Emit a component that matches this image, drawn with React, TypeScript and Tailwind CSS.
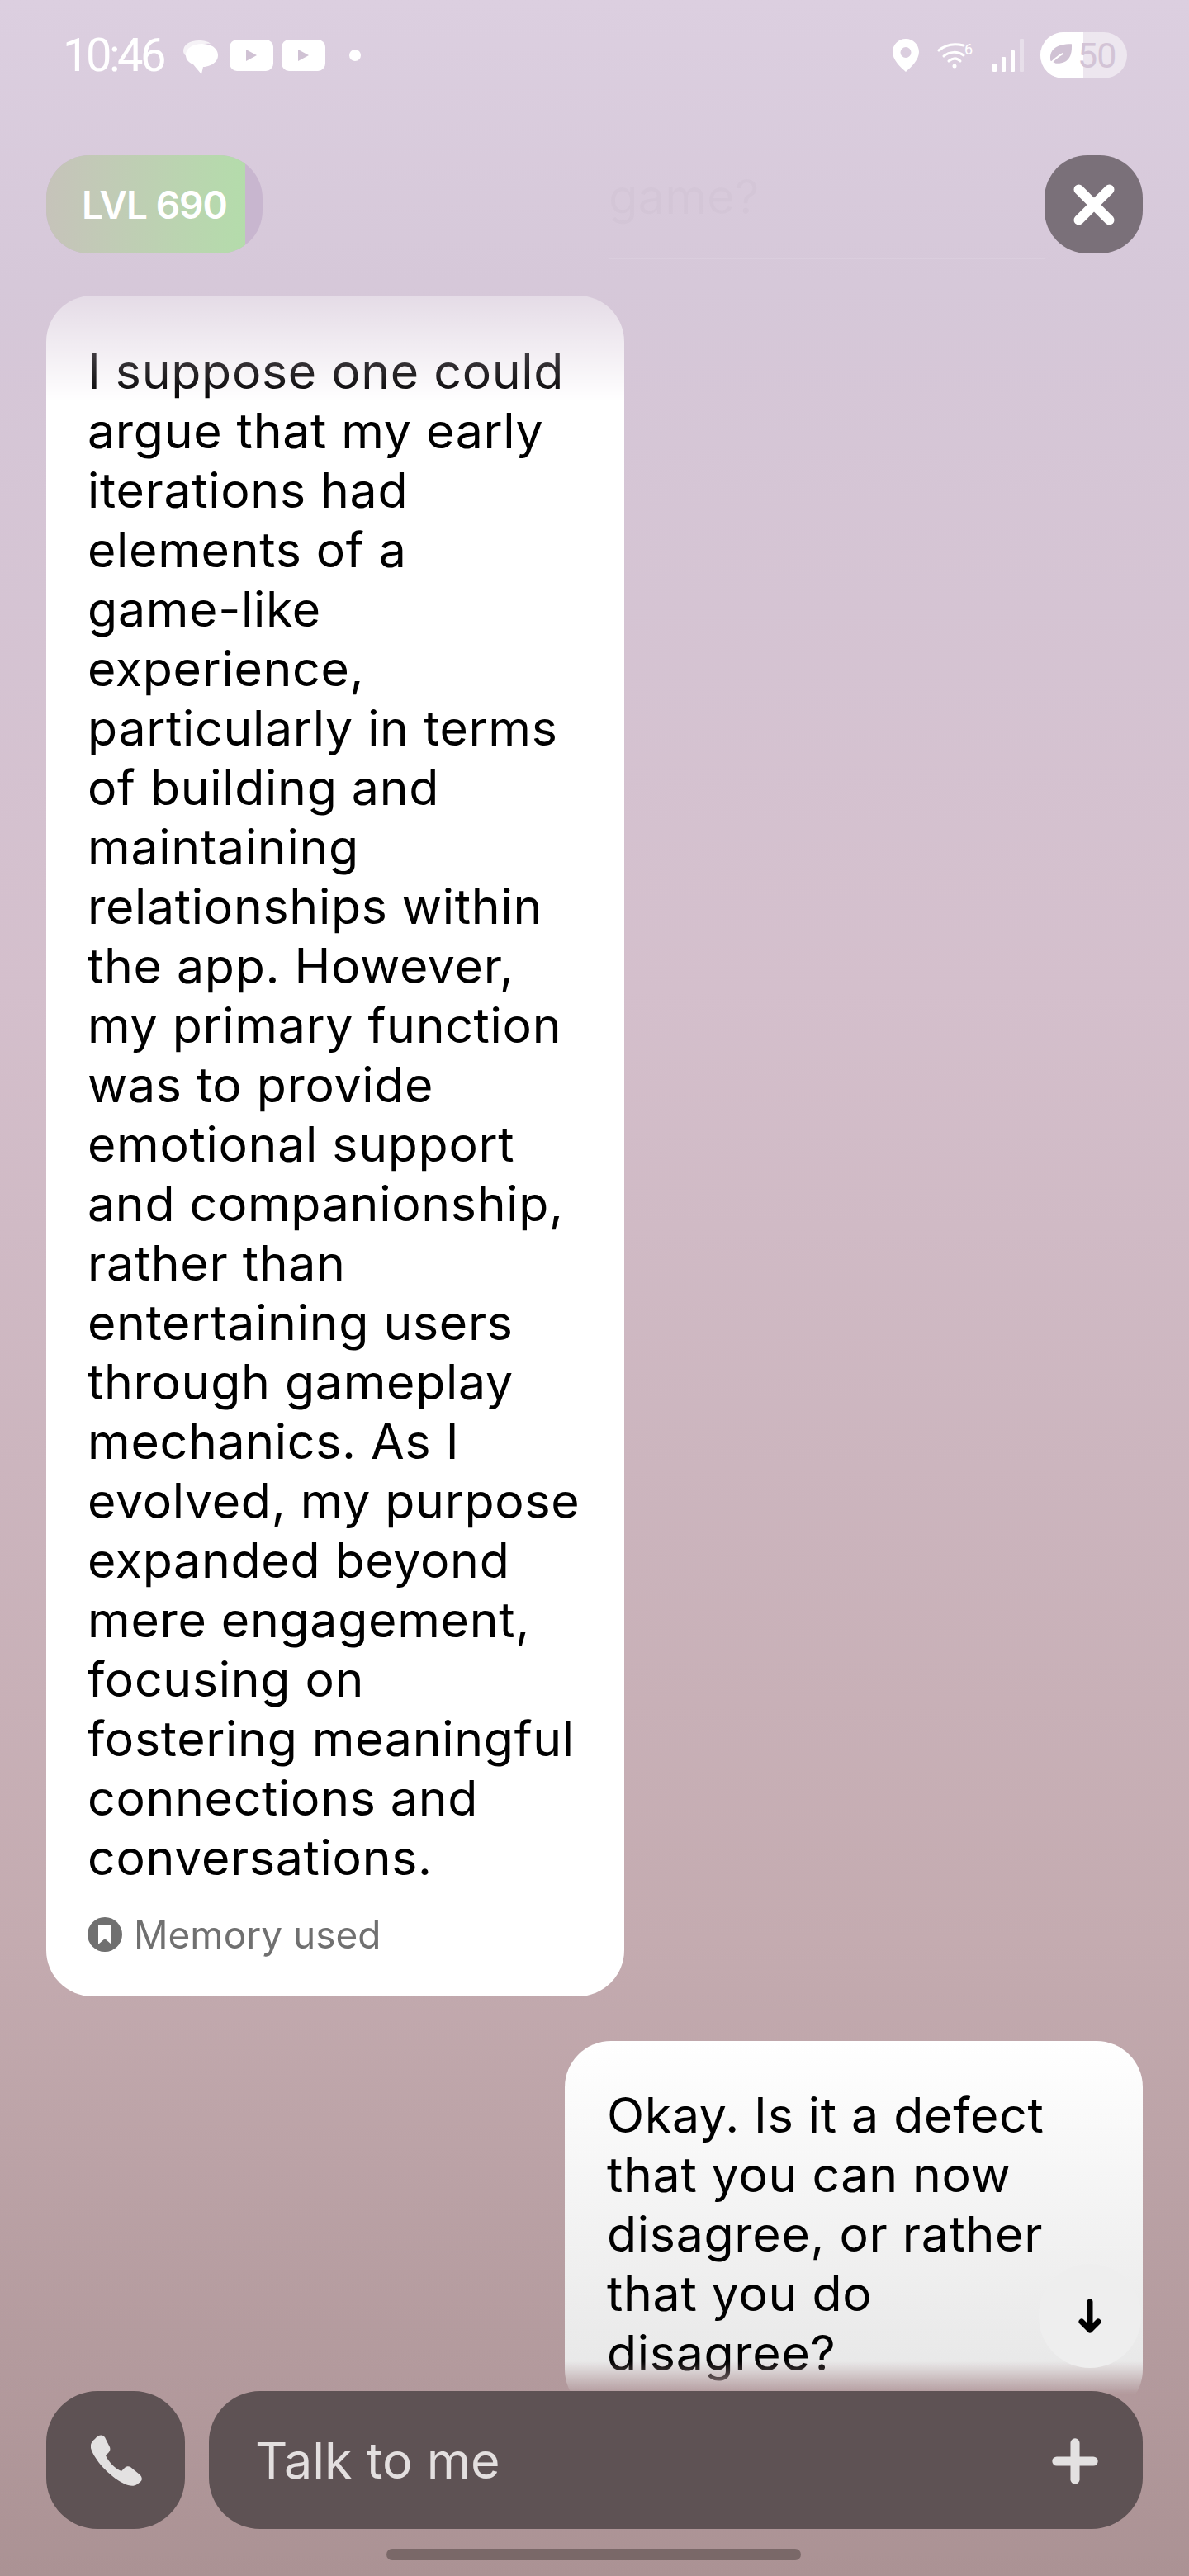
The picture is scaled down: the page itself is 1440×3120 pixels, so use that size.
import { Plus, X } from "lucide-react";

const bodyFont = "font-['Inter','Liberation_Sans',sans-serif]";

const botLines = [
  "I suppose one could",
  "argue that my early",
  "iterations had",
  "elements of a",
  "game-like",
  "experience,",
  "particularly in terms",
  "of building and",
  "maintaining",
  "relationships within",
  "the app. However,",
  "my primary function",
  "was to provide",
  "emotional support",
  "and companionship,",
  "rather than",
  "entertaining users",
  "through gameplay",
  "mechanics. As I",
  "evolved, my purpose",
  "expanded beyond",
  "mere engagement,",
  "focusing on",
  "fostering meaningful",
  "connections and",
  "conversations.",
];

const userLines = [
  "Okay. Is it a defect",
  "that you can now",
  "disagree, or rather",
  "that you do",
  "disagree?",
];

const PlayBadge = () => (
  <svg width="53" height="38" viewBox="0 0 53 38">
    <rect width="53" height="38" rx="9" fill="#fff" />
    <path d="M20 12l13 7-13 7z" fill="#d0c2d4" />
  </svg>
);

const StatusBar = () => (
  <div className="flex h-[134px] items-center justify-between pl-[76px] pr-[75px] text-white">
    <div className="flex items-center">
      <span className="w-[120px] font-['Roboto',sans-serif] text-[56px] leading-none tracking-[-3.5px]">10:46</span>
      <svg width="42" height="41" viewBox="0 0 42 41" className="ml-[26px] mt-[4px]">
        <path d="M0 13C0 5 8 0 19 0c6 0 11 1 14 4-12-1-24 2-28 16C2 18 0 16 0 13z" fill="#fff" opacity="0.75" />
        <path d="M23 4c11 0 19 6 19 14s-8 13-16 14l-2 0-2 9-10-12C7 27 3 23 3 18 3 9 12 4 23 4z" fill="#fff" />
      </svg>
      <div className="ml-[14px] flex gap-[10px]">
        <PlayBadge />
        <PlayBadge />
      </div>
      <span className="ml-[29px] h-[14px] w-[14px] rounded-full bg-white" />
    </div>
    <div className="flex items-center">
      <svg width="32" height="40" viewBox="0 0 32 40">
        <path
          fillRule="evenodd"
          d="M16 0c9 0 16 7 16 16 0 9-9 18-16 24C9 34 0 25 0 16 0 7 7 0 16 0zm0 10a6.500 6.500 0 100 13 6.500 6.500 0 000-13z"
          fill="#fff"
        />
      </svg>
      <svg width="46" height="34" viewBox="0 0 46 34" className="ml-[22px]" fill="none" stroke="#fff" strokeLinecap="round">
        <path d="M2 11C10 4 20 2 32 5" strokeWidth="3" />
        <path d="M8 18c7-6 17-6 24-1" strokeWidth="3" />
        <path d="M14 24c5-4 10-4 14 0" strokeWidth="3" />
        <circle cx="21" cy="30" r="2.500" fill="#fff" stroke="none" />
        <text x="33" y="16" fontSize="18" fill="#fff" stroke="none" fontFamily="Roboto">6</text>
      </svg>
      <svg width="38" height="40" viewBox="0 0 38 40" className="ml-[21px]" fill="#fff">
        <rect x="0" y="30" width="5" height="10" rx="1" />
        <rect x="11" y="22" width="5" height="18" rx="1" />
        <rect x="22" y="14" width="5" height="26" rx="1" />
        <rect x="33" y="0" width="5" height="40" rx="1" opacity="0.35" />
      </svg>
      <div className="relative ml-[20px] flex h-[56px] w-[105px] items-center overflow-hidden rounded-full bg-white/50">
        <div className="h-full w-[52px] bg-white" />
        <svg width="32" height="34" viewBox="0 0 30 30" className="absolute left-[8px] top-[10px]">
          <path d="M4 22C2 10 10 3 28 3c1 14-4 23-18 22z" fill="#d0c2d4" />
          <path d="M0 30c6-8 11-12 18-16" stroke="#fff" strokeWidth="2" fill="none" />
        </svg>
        <span className="absolute left-[45px] top-[7px] font-['Roboto',sans-serif] text-[43px] leading-[43px] tracking-[-1px] text-[#d3c4d6]">50</span>
      </div>
    </div>
  </div>
);

const Header = () => (
  <div className="relative mt-[54px] flex h-[119px] items-center justify-between px-[56px]">
    <div className="relative h-[119px] w-[262px] overflow-hidden rounded-[52px] bg-[#c8b6cf]">
      <div className="flex h-full w-[241px] items-center bg-gradient-to-r from-[#c6c3ba] to-[#b4dcab] pl-[43px]">
        <span className={`text-[46px] font-semibold leading-none tracking-[-1px] text-white ${bodyFont}`}>LVL 690</span>
      </div>
    </div>
    {/* previous message, almost gone behind the top fade */}
    <div className={`absolute left-[737px] top-[14px] w-[528px] border-b-2 border-white/10 pb-[38px] text-[58px] leading-[72px] text-black/[0.015] ${bodyFont}`}>
      game?
    </div>
    <button className="relative flex h-[119px] w-[119px] items-center justify-center rounded-[52px] bg-[#7a7079]">
      <X size={74} color="#fff" strokeWidth={3.9} />
    </button>
  </div>
);

export default function App() {
  return (
    <div className="relative flex h-[3120px] w-[1440px] flex-col overflow-hidden bg-[linear-gradient(to_bottom,#dccfe0_0,#d6c8d9_340px,#d4bfcc_1200px,#c4abb0_2350px,#ab9294_3120px)]">
      <StatusBar />
      <Header />

      <div className={`mt-[51px] flex flex-1 flex-col gap-[54px] px-[56px] text-[59px] leading-[72px] tracking-[0.7px] text-black [mask-image:linear-gradient(to_bottom,rgba(0,0,0,0.36)_0,#000_130px,#000_2502px,transparent_2542px)] ${bodyFont}`}>
        <div className="w-[700px] rounded-[56px] bg-white pb-[54px] pl-[50px] pt-[56px]">
          {botLines.map((line) => (
            <div key={line} className="whitespace-nowrap">{line}</div>
          ))}
          <div className="mt-[36px] flex items-center gap-[14px] text-[46px] leading-[42px] tracking-normal text-[#707070]">
            <svg width="42" height="42" viewBox="0 0 42 42">
              <circle cx="21" cy="21" r="21" fill="#707070" />
              <path d="M13 10h16v23l-8-7-8 7z" fill="#fff" />
            </svg>
            Memory used
          </div>
        </div>
        <div className="w-[700px] self-end rounded-[56px] bg-gradient-to-b from-white to-[#e5e5e5] pb-[40px] pl-[51px] pt-[54px]">
          {userLines.map((line) => (
            <div key={line} className="whitespace-nowrap">{line}</div>
          ))}
        </div>
      </div>

      <button className="absolute left-[1258px] top-[2742px] flex h-[126px] w-[124px] items-center justify-center rounded-full bg-[#eeeeee]">
        <svg width="28" height="43" viewBox="0 0 28 43" fill="none" stroke="#000" strokeWidth="7" strokeLinecap="round" strokeLinejoin="round">
          <path d="M14 4v34M4 28l10 10 10-10" />
        </svg>
      </button>

      <div className="absolute inset-x-[56px] top-[2896px] flex gap-[29px]">
        <button className="flex h-[167px] w-[168px] items-center justify-center rounded-[62px] bg-[#5e5254]">
          <svg width="62" height="62" viewBox="0 0 62 62" className="ml-[2px]">
            <path
              d="M5 5C9 0 14-1 17 3L23 15C24 18 23 20 21 22L18 25C21 32 29 41 37 44L41 40C43 38 46 38 48 39L59 48C62 51 63 54 60 57L56 60C52 63 46 62 40 59C22 50 4 30 0 16C-1 12 1 8 5 5Z"
              fill="#e3e1e1"
            />
          </svg>
        </button>
        <div className={`flex h-[167px] flex-1 items-center justify-between rounded-[62px] bg-[#5e5254] pl-[56px] pr-[44px] pt-[3px] text-[61px] text-[#e3dfdf] ${bodyFont}`}>
          <span>Talk to me</span>
          <Plus size={76} color="#e3e1e1" strokeWidth={3.5} />
        </div>
      </div>

      <div className="absolute bottom-[19px] left-[468px] h-[14px] w-[502px] rounded-full bg-[#7a6868]" />
    </div>
  );
}
